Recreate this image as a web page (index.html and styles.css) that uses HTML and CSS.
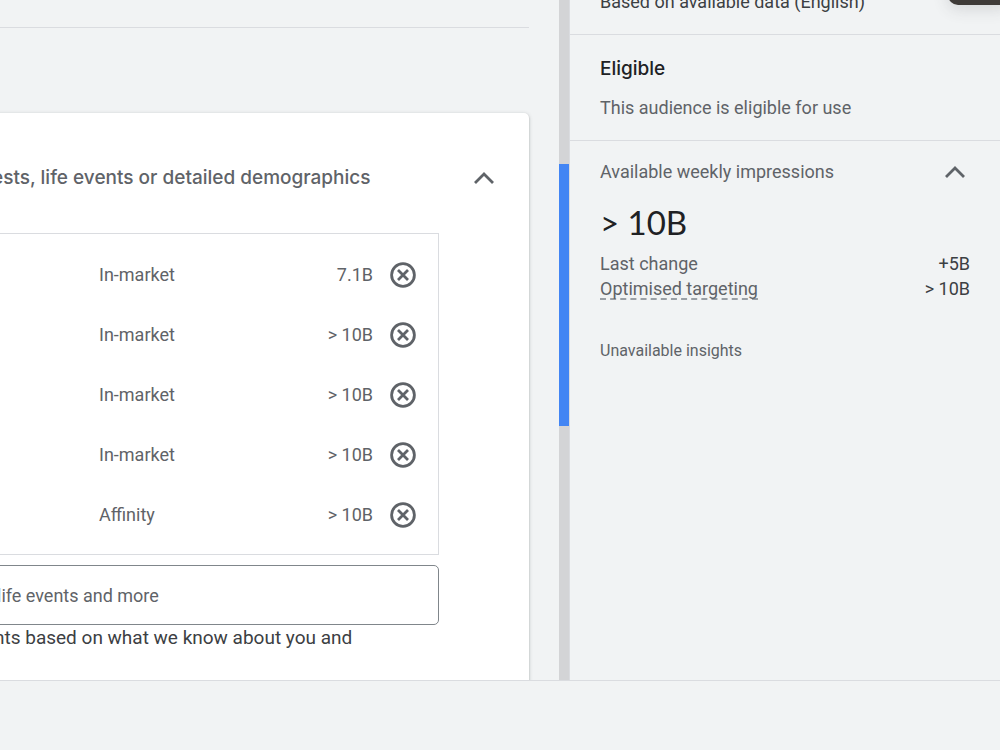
FILE: index.html
```html
<!DOCTYPE html>
<html lang="en-GB">
<head>
    <meta charset="UTF-8">
    <meta name="viewport" content="width=device-width, initial-scale=1.0">
    <title>Audience</title>
    <link rel="stylesheet" href="styles.css">
</head>
<body>

    <div class="workspace">

        <!-- Audience editor -->
        <main class="editor">
            <div class="section-end"></div>

            <section class="card">
                <div class="card-header">
                    <h2 class="card-title">ests, life events or detailed demographics</h2>
                    <button class="icon-button" aria-label="Collapse segments">
                        <svg class="chevron" viewBox="0 0 20 12"><path d="M1 11L10 2L19 11"/></svg>
                    </button>
                </div>

                <div class="segments">
                    <table class="segment-table">
                        <tr>
                            <td class="type">In-market</td>
                            <td class="size">7.1B</td>
                            <td class="action"><button class="icon-button" aria-label="Remove"><svg class="remove" viewBox="0 0 26 26"><circle cx="13" cy="13" r="11.4"/><path d="M8 8L18 18M18 8L8 18"/></svg></button></td>
                        </tr>
                        <tr>
                            <td class="type">In-market</td>
                            <td class="size">&gt; 10B</td>
                            <td class="action"><button class="icon-button" aria-label="Remove"><svg class="remove" viewBox="0 0 26 26"><circle cx="13" cy="13" r="11.4"/><path d="M8 8L18 18M18 8L8 18"/></svg></button></td>
                        </tr>
                        <tr>
                            <td class="type">In-market</td>
                            <td class="size">&gt; 10B</td>
                            <td class="action"><button class="icon-button" aria-label="Remove"><svg class="remove" viewBox="0 0 26 26"><circle cx="13" cy="13" r="11.4"/><path d="M8 8L18 18M18 8L8 18"/></svg></button></td>
                        </tr>
                        <tr>
                            <td class="type">In-market</td>
                            <td class="size">&gt; 10B</td>
                            <td class="action"><button class="icon-button" aria-label="Remove"><svg class="remove" viewBox="0 0 26 26"><circle cx="13" cy="13" r="11.4"/><path d="M8 8L18 18M18 8L8 18"/></svg></button></td>
                        </tr>
                        <tr>
                            <td class="type">Affinity</td>
                            <td class="size">&gt; 10B</td>
                            <td class="action"><button class="icon-button" aria-label="Remove"><svg class="remove" viewBox="0 0 26 26"><circle cx="13" cy="13" r="11.4"/><path d="M8 8L18 18M18 8L8 18"/></svg></button></td>
                        </tr>
                    </table>
                </div>

                <input class="search" type="text" placeholder="life events and more" aria-label="Add segments">
                <p class="hint">nts based on what we know about you and</p>
            </section>
        </main>

        <!-- Scroll position -->
        <div class="track">
            <div class="thumb"></div>
        </div>

        <!-- Insights -->
        <aside class="insights">
            <div class="toast"></div>

            <div class="source">Based on available data (English)</div>

            <section class="status">
                <h3 class="status-title">Eligible</h3>
                <p class="status-text">This audience is eligible for use</p>
            </section>

            <section class="impressions">
                <div class="impressions-header">
                    <span>Available weekly impressions</span>
                    <button class="icon-button" aria-label="Collapse impressions">
                        <svg class="chevron" viewBox="0 0 20 12"><path d="M1 11L10 2L19 11"/></svg>
                    </button>
                </div>
                <div class="total">&gt; 10B</div>
                <div class="row"><span>Last change</span><span class="value">+5B</span></div>
                <div class="row"><span class="term">Optimised targeting</span><span class="value">&gt; 10B</span></div>
                <p class="unavailable">Unavailable insights</p>
            </section>
        </aside>
    </div>

    <footer class="footer"></footer>

</body>
</html>
```
FILE: styles.css
```css
* {
    box-sizing: border-box;
}
body {
    display: flex;
    flex-direction: column;
    height: 100vh;
    margin: 0;
    overflow: hidden;
    background-color: #f1f3f4;
    color: #5f6368;
    font-family: Roboto, Arial, sans-serif;
    font-size: 18px;
    line-height: 24px;
}
h2, h3, p {
    margin: 0;
}
.workspace {
    display: flex;
    flex: 1;
    min-height: 0;
    overflow: hidden;
}

/* Editor */
.editor {
    flex: 1;
    min-width: 0;
    padding-right: 30px;
    overflow: hidden;
}
.section-end {
    height: 28px;
    margin-bottom: 85px;
    border-bottom: 1px solid #dadce0;
}
.card {
    min-height: 700px;
    margin-left: -24px;
    padding-right: 90px;
    background-color: #fff;
    border-radius: 5px;
    box-shadow: 0 1px 2px rgba(60, 64, 67, 0.3), 0 1px 4px rgba(60, 64, 67, 0.2);
}
.card-header {
    display: flex;
    align-items: center;
    justify-content: space-between;
    height: 120px;
    margin-right: -55px;
    padding: 9px 0 0 16px;
}
.card-title {
    font-family: Inter, sans-serif;
    font-size: 19px;
    font-weight: 500;
    white-space: nowrap;
}
.icon-button {
    display: block;
    padding: 0;
    border: none;
    background: none;
    cursor: pointer;
}
.icon-button svg {
    display: block;
    fill: none;
    stroke: #5f6368;
}
.chevron {
    width: 20px;
    height: 12px;
    stroke-width: 2.8;
}
.remove {
    width: 26px;
    height: 26px;
    stroke-width: 2.8;
}
.segments {
    padding: 11px 22px 9px 122px;
    border: 1px solid #dadce0;
}
.segment-table {
    width: 100%;
    border-collapse: collapse;
}
.segment-table td {
    height: 60px;
    padding: 0;
}
.segment-table .size {
    text-align: right;
}
.segment-table .action {
    width: 43px;
    padding-left: 17px;
}
.search {
    display: block;
    width: 100%;
    height: 60px;
    margin-top: 10px;
    padding: 0 20px;
    border: 1px solid #80868b;
    border-radius: 5px;
    background-color: #fff;
    color: #3c4043;
    font: inherit;
}
.search::placeholder {
    color: #5f6368;
    opacity: 1;
}
.hint {
    padding: 1px 0 0 18px;
    color: #3c4043;
    font-size: 19px;
    white-space: nowrap;
}

/* Scroll position */
.track {
    width: 11px;
    padding-top: 164px;
    border-right: 1px solid #dadce0;
    background-color: #d3d4d6;
}
.thumb {
    height: 262px;
    background-color: #4285f4;
}

/* Insights */
.insights {
    position: relative;
    width: 43%;
    overflow: hidden;
}
.toast {
    position: absolute;
    top: -35px;
    right: -10px;
    width: 62px;
    height: 40px;
    border-radius: 10px;
    background-color: #3f3b38;
    box-shadow: 0 4px 16px rgba(60, 64, 67, 0.16);
}
.source {
    height: 35px;
    padding: 0 30px;
    border-bottom: 1px solid #dadce0;
    color: #3c4043;
    line-height: 4px;
}
.status {
    padding: 22px 30px 20px;
    border-bottom: 1px solid #dadce0;
}
.status-title {
    margin-bottom: 15px;
    color: #202124;
    font-family: Inter, sans-serif;
    font-size: 19px;
    font-weight: 500;
}
.impressions {
    padding: 19px 30px;
}
.impressions-header {
    display: flex;
    align-items: center;
    justify-content: space-between;
    padding-right: 5px;
}
.total {
    margin: 18px 0 10px;
    color: #202124;
    font-family: Lato, sans-serif;
    font-size: 33px;
    line-height: 40px;
}
.row {
    display: flex;
    justify-content: space-between;
    height: 25px;
}
.value {
    color: #3c4043;
}
.term {
    height: 23px;
    border-bottom: 2px dashed #9aa0a6;
}
.unavailable {
    margin-top: 37px;
    font-size: 16px;
}

.footer {
    height: 70px;
    border-top: 1px solid #dadce0;
}
```
